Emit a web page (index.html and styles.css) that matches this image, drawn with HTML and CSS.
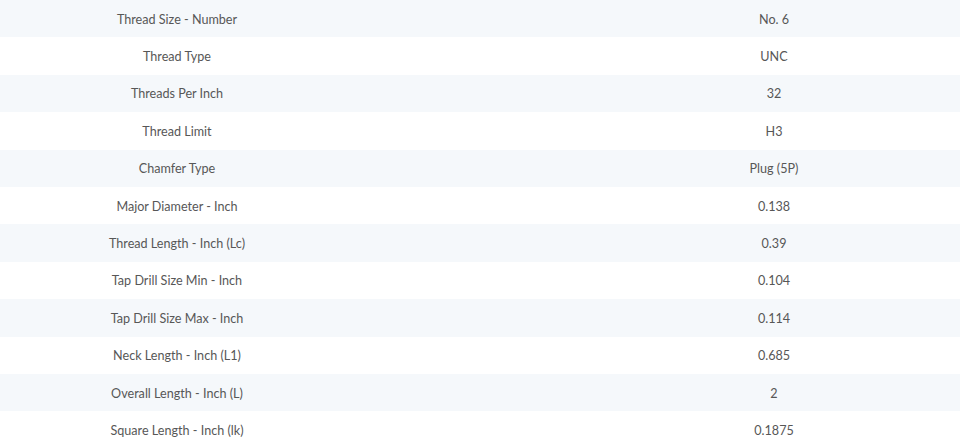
FILE: index.html
```html
<!DOCTYPE html>
<html lang="en">
<head>
    <meta charset="UTF-8">
    <meta name="viewport" content="width=device-width, initial-scale=1.0">
    <title>Tap Specifications</title>
    <link rel="stylesheet" href="styles.css">
</head>
<body>
    <div class="spec-table">
        <div class="spec-row"><div class="spec-label">Thread Size - Number</div><div class="spec-value">No. 6</div></div>
        <div class="spec-row"><div class="spec-label">Thread Type</div><div class="spec-value">UNC</div></div>
        <div class="spec-row"><div class="spec-label">Threads Per Inch</div><div class="spec-value">32</div></div>
        <div class="spec-row"><div class="spec-label">Thread Limit</div><div class="spec-value">H3</div></div>
        <div class="spec-row"><div class="spec-label">Chamfer Type</div><div class="spec-value">Plug (5P)</div></div>
        <div class="spec-row"><div class="spec-label">Major Diameter - Inch</div><div class="spec-value">0.138</div></div>
        <div class="spec-row"><div class="spec-label">Thread Length - Inch (Lc)</div><div class="spec-value">0.39</div></div>
        <div class="spec-row"><div class="spec-label">Tap Drill Size Min - Inch</div><div class="spec-value">0.104</div></div>
        <div class="spec-row"><div class="spec-label">Tap Drill Size Max - Inch</div><div class="spec-value">0.114</div></div>
        <div class="spec-row"><div class="spec-label">Neck Length - Inch (L1)</div><div class="spec-value">0.685</div></div>
        <div class="spec-row"><div class="spec-label">Overall Length - Inch (L)</div><div class="spec-value">2</div></div>
        <div class="spec-row"><div class="spec-label">Square Length - Inch (lk)</div><div class="spec-value">0.1875</div></div>
    </div>
</body>
</html>
```

FILE: styles.css
```css
body {
    margin: 0;
    padding: 0;
    background-color: #fff;
    font-family: Lato, "Open Sans", sans-serif;
    font-size: 12.6px;
    color: #575757;
    overflow: hidden;
}

.spec-table {
    display: flex;
    flex-direction: column;
}

.spec-row {
    display: flex;
    justify-content: space-between;
    align-items: center;
    height: 37.4px;
}

.spec-row:nth-child(odd) {
    background-color: #f5f8fb;
}

.spec-label,
.spec-value {
    padding-top: 1px;
    text-align: center;
}

.spec-label {
    width: 354px;
}

.spec-value {
    width: 372px;
}
```
